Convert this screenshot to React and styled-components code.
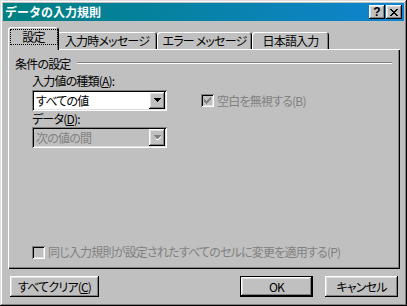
import React from "react";
import styled, { createGlobalStyle, css } from "styled-components";

const Global = createGlobalStyle`
  html, body { margin: 0; padding: 0; background: #c0c0c0; }
  body {
    font-family: "Noto Sans CJK JP", "Noto Sans", sans-serif;
    font-size: 12px;
    color: #000;
    font-feature-settings: "palt" 1;
    letter-spacing: -0.8px;
  }
  * { box-sizing: border-box; }
`;

const raised = css`
  box-shadow: inset -1px -1px #000, inset 1px 1px #fff, inset -2px -2px #808080, inset 2px 2px #dfdfdf;
`;
const sunken = css`
  box-shadow: inset 1px 1px #808080, inset -1px -1px #fff, inset 2px 2px #000, inset -2px -2px #dfdfdf;
`;

const Window = styled.div`
  width: 407px;
  height: 306px;
  padding: 3px;
  background: #c0c0c0;
  display: flex;
  flex-direction: column;
  box-shadow: inset -1px -1px #000, inset 1px 1px #dfdfdf, inset -2px -2px #808080, inset 2px 2px #fff;
`;

const TitleBar = styled.div`
  height: 18px;
  display: flex;
  align-items: center;
  padding: 0 2px 0 2px;
  background: linear-gradient(to right, #008080, #1084d0);
`;

const Title = styled.div`
  flex: 1;
  color: #fff;
  font-weight: bold;
  font-size: 12px;
  line-height: 18px;
  white-space: nowrap;
  font-feature-settings: normal;
  letter-spacing: 0;
`;

const CapButton = styled.div`
  width: 16px;
  height: 14px;
  background: #c0c0c0;
  ${raised};
  display: flex;
  align-items: center;
  justify-content: center;
  font-family: "Liberation Sans", sans-serif;
  font-weight: bold;
  font-size: 12px;
  line-height: 14px;
  letter-spacing: 0;
  margin-left: ${(p) => p.$gap || 0}px;
`;

const Body = styled.div`
  flex: 1;
  display: flex;
  flex-direction: column;
  padding: 7px 4px 0 5px;
`;

const TabRow = styled.div`
  display: flex;
  align-items: flex-end;
  height: 22px;
  padding-left: 2px;
  position: relative;
  z-index: 1;
  margin-bottom: -1px;
`;

const Tab = styled.div`
  width: ${(p) => p.$w}px;
  height: ${(p) => (p.$active ? 23 : 18)}px;
  margin: ${(p) => (p.$active ? "0 -2px" : "0")};
  padding-bottom: ${(p) => (p.$active ? 3 : 1)}px;
  background: #c0c0c0;
  border-radius: 3px 3px 0 0;
  box-shadow: inset 1px 1px #fff, inset -1px 0 #000, inset -2px 0 #808080;
  display: flex;
  align-items: center;
  justify-content: center;
  white-space: nowrap;
  position: relative;
  z-index: ${(p) => (p.$active ? 2 : 1)};
  ${(p) => !p.$active && css`border-bottom: 1px solid #fff;`}
`;

const Focus = styled.div`
  width: 48px;
  height: 16px;
  border: 1px dotted #000;
  display: flex;
  align-items: center;
  justify-content: center;
  line-height: 14px;
`;

const Panel = styled.div`
  height: 220px;
  background: #c0c0c0;
  box-shadow: inset 1px 1px #fff, inset -1px -1px #000, inset -2px -2px #808080;
  padding: 7px 8px 10px 7px;
  display: flex;
  flex-direction: column;
`;

const GroupHead = styled.div`
  display: flex;
  align-items: center;
  height: 14px;
`;

const Etch = styled.div`
  flex: 1;
  height: 2px;
  margin-left: 6px;
  border-top: 1px solid #808080;
  border-bottom: 1px solid #fff;
`;

const Text = styled.div`
  line-height: 14px;
  height: 14px;
  white-space: nowrap;
  color: ${(p) => (p.$disabled ? "#808080" : "#000")};
  margin-top: ${(p) => p.$mt || 0}px;
  margin-left: ${(p) => p.$ml || 0}px;
`;

const U = styled.span`
  text-decoration: underline;
  text-underline-offset: 1px;
`;

const FieldRow = styled.div`
  display: flex;
  align-items: center;
  margin-top: ${(p) => p.$mt || 0}px;
  padding-left: 17px;
`;

const Combo = styled.div`
  width: 135px;
  height: 21px;
  ${sunken};
  background: ${(p) => (p.$disabled ? "#c0c0c0" : "#fff")};
  padding: 2px;
  display: flex;
  align-items: stretch;
`;

const ComboText = styled.div`
  flex: 1;
  padding-left: 2px;
  line-height: 17px;
  white-space: nowrap;
  color: ${(p) => (p.$disabled ? "#808080" : "#000")};
`;

const ArrowBtn = styled.div`
  width: 16px;
  background: #c0c0c0;
  ${raised};
  display: flex;
  align-items: center;
  justify-content: center;
`;

const CheckRow = styled.div`
  display: flex;
  align-items: center;
  margin-left: ${(p) => p.$ml || 0}px;
  margin-top: ${(p) => p.$mt || 0}px;
`;

const CheckBox = styled.div`
  width: 13px;
  height: 13px;
  flex: none;
  background: #c0c0c0;
  box-shadow: inset 1px 1px #808080, inset -1px -1px #fff, inset 2px 2px #000, inset -2px -2px #dfdfdf;
  display: flex;
  align-items: center;
  justify-content: center;
  margin-right: 3px;
`;

const Spacer = styled.div`
  flex: 1;
`;

const ButtonRow = styled.div`
  display: flex;
  align-items: center;
  margin-top: 7px;
  padding: 0 2px;
`;

const Button = styled.div`
  width: ${(p) => p.$w}px;
  height: 21px;
  background: #c0c0c0;
  display: flex;
  align-items: center;
  justify-content: center;
  white-space: nowrap;
  margin-left: ${(p) => p.$ml || 0}px;
  ${(p) =>
    p.$default
      ? css`box-shadow: inset 0 0 0 1px #000, inset -2px -2px #000, inset 2px 2px #fff, inset -3px -3px #808080, inset 3px 3px #dfdfdf;`
      : raised}
`;

const Arrow = ({ disabled }) => (
  <svg width="7" height="5" viewBox="0 0 7 5" shapeRendering="crispEdges">
    {disabled && <path d="M2 4h3v1h-3zM5 3h1v1h-1zM6 2h1v1h-1z" fill="#fff" />}
    <path d="M0 0h7v1h-7zM1 1h5v1h-5zM2 2h3v1h-3zM3 3h1v1h-1z" fill={disabled ? "#808080" : "#000"} />
  </svg>
);

const Check = () => (
  <svg width="9" height="9" viewBox="0 0 9 9" shapeRendering="crispEdges">
    <path d="M1 3h1v3h-1zM2 4h1v3h-1zM3 5h1v3h-1zM4 4h1v3h-1zM5 3h1v3h-1zM6 2h1v3h-1zM7 1h1v3h-1z" fill="#808080" />
  </svg>
);

const CloseGlyph = () => (
  <svg width="8" height="7" viewBox="0 0 8 7" shapeRendering="crispEdges">
    <path d="M0 0h2v1h-2zM6 0h2v1h-2zM1 1h2v1h-2zM5 1h2v1h-2zM2 2h4v1h-4zM3 3h2v1h-2zM2 4h4v1h-4zM1 5h2v1h-2zM5 5h2v1h-2zM0 6h2v1h-2zM6 6h2v1h-2z" fill="#000" />
  </svg>
);

export default function App() {
  return (
    <>
      <Global />
      <Window>
        <TitleBar>
          <Title>データの入力規則</Title>
          <CapButton>?</CapButton>
          <CapButton $gap={1}>
            <CloseGlyph />
          </CapButton>
        </TitleBar>
        <Body>
          <TabRow>
            <Tab $w={51} $active>
              <Focus>設定</Focus>
            </Tab>
            <Tab $w={100}>入力時メッセージ</Tab>
            <Tab $w={95}>エラー メッセージ</Tab>
            <Tab $w={77}>日本語入力</Tab>
          </TabRow>
          <Panel>
            <GroupHead>
              条件の設定
              <Etch />
            </GroupHead>
            <Text $mt={4} $ml={17}>
              入力値の種類(<U>A</U>):
            </Text>
            <FieldRow $mt={2}>
              <Combo>
                <ComboText>すべての値</ComboText>
                <ArrowBtn>
                  <Arrow />
                </ArrowBtn>
              </Combo>
              <CheckRow $ml={34}>
                <CheckBox>
                  <Check />
                </CheckBox>
                <Text $disabled>空白を無視する(B)</Text>
              </CheckRow>
            </FieldRow>
            <Text $mt={1} $ml={17}>
              データ(<U>D</U>):
            </Text>
            <FieldRow $mt={1}>
              <Combo $disabled>
                <ComboText $disabled>次の値の間</ComboText>
                <ArrowBtn>
                  <Arrow disabled />
                </ArrowBtn>
              </Combo>
            </FieldRow>
            <Spacer />
            <CheckRow $ml={17}>
              <CheckBox />
              <Text $disabled>同じ入力規則が設定されたすべてのセルに変更を適用する(P)</Text>
            </CheckRow>
          </Panel>
          <ButtonRow>
            <Button $w={89}>
              すべてクリア(<U>C</U>)
            </Button>
            <Spacer />
            <Button $w={73} $default>OK</Button>
            <Button $w={73} $ml={12}>キャンセル</Button>
          </ButtonRow>
        </Body>
      </Window>
    </>
  );
}
